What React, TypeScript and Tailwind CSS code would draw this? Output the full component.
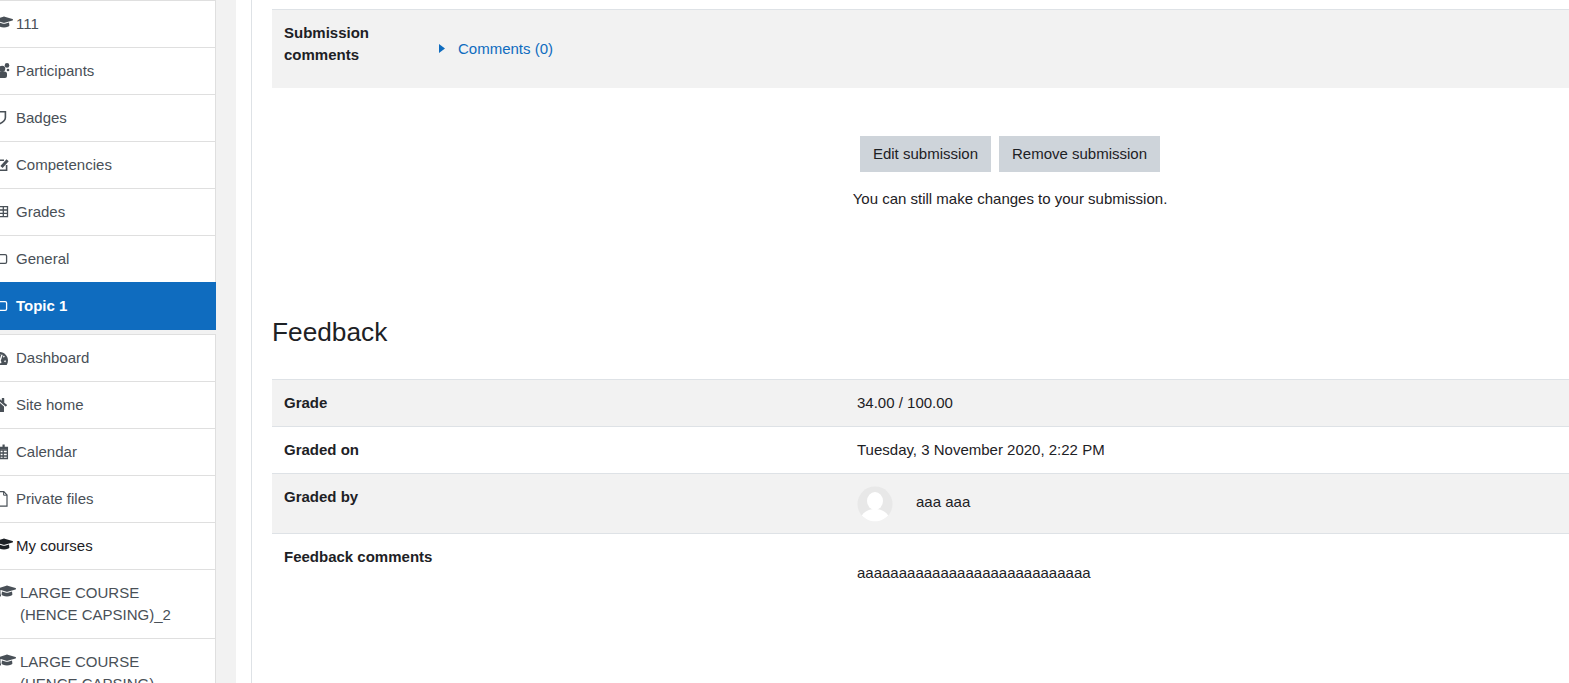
import React from "react";
import { FaGraduationCap, FaTachometerAlt, FaHome } from "react-icons/fa";

const Cap = ({ wide }: { wide?: boolean }) =>
  wide ? (
    <span className="flex w-[20px] shrink-0 overflow-hidden">
      <FaGraduationCap size={18} className="shrink-0 -ml-[2px]" />
    </span>
  ) : (
    <span className="mb-[4px] flex w-[16px] shrink-0 overflow-hidden">
      <FaGraduationCap size={18} className="shrink-0 -ml-[5px]" />
    </span>
  );

const Box = ({ children }: { children: React.ReactNode }) => (
  <svg width="16" height="16" viewBox="0 0 16 16" className="shrink-0" fill="none" stroke="currentColor">
    {children}
  </svg>
);

const Users = () => (
  <svg width="16" height="16" viewBox="0 0 16 16" className="shrink-0" fill="currentColor">
    <circle cx="7" cy="2.4" r="2.3" />
    <circle cx="2.2" cy="5.8" r="3.1" />
    <circle cx="8" cy="7" r="1.3" />
    <path d="M-3 15V11Q-3 8.5 -0.5 8.5H4.5Q7 8.5 7 11V13Q7 15 5 15Z" />
  </svg>
);
const Shield = () => (
  <Box>
    <path d="M-1 1.8H5.4V7.5C5.4 10.5 2.5 12.5 -1 14" strokeWidth="1.6" />
  </Box>
);
const Edit = () => (
  <Box>
    <path d="M-1 3.2H4M6.6 8V13.2H-1" strokeWidth="1.6" />
    <path d="M1.5 10L7.6 3.2" strokeWidth="3" />
  </Box>
);
const Table = () => (
  <Box>
    <path d="M-1 2.6H7.5V12.6H-1M-1 6H7.5M-1 9.3H7.5M3.3 2.6V12.6" strokeWidth="1.3" />
  </Box>
);
const Square = () => (
  <Box>
    <path d="M-1 3.7H5.2Q6.6 3.7 6.6 5.1V11Q6.6 12.4 5.2 12.4H-1" strokeWidth="1.3" />
  </Box>
);
const Gauge = () => (
  <span className="flex w-[16px] shrink-0 overflow-hidden">
    <FaTachometerAlt size={17} className="shrink-0 -ml-[9px]" />
  </span>
);
const Home = () => (
  <span className="flex w-[16px] shrink-0 overflow-hidden">
    <FaHome size={18} className="shrink-0 -ml-[11px]" />
  </span>
);
const Calendar = () => (
  <Box>
    <path d="M-1 6H7.4M-1 9H7.4M-1 12H7.4M3.2 6V14.5M0 5V14.5H7.4V3.4H-1" strokeWidth="1.3" />
    <path d="M3.6 0.5V3.6" strokeWidth="2.2" />
    <path d="M-1 4.4H7.4" strokeWidth="2" />
  </Box>
);
const File = () => (
  <Box>
    <path d="M-1 0.7H3.8L7 4V15.2H-1" strokeWidth="1.2" />
    <path d="M3.6 0.7V4.2H7" strokeWidth="1" />
  </Box>
);

const Row = ({
  icon,
  label,
  dark,
}: {
  icon: React.ReactNode;
  label: string;
  dark?: boolean;
}) => (
  <div
    className={
      dark
        ? "flex h-[47px] items-center border-t border-r border-[#dfdfdf] bg-white text-[#1d2125]"
        : "flex h-[47px] items-center border-t border-r border-[#dfdfdf] bg-white text-[#495057]"
    }
  >
    {icon}
    <span>{label}</span>
  </div>
);

const CourseRow = ({ clipped }: { clipped?: boolean }) => (
  <div className="flex items-start border-t border-r border-[#dfdfdf] bg-white py-[12px] leading-[22px] text-[#495057]">
    <Cap wide />
    <span>
      LARGE COURSE
      <br />
      {clipped ? "(HENCE CAPSING)" : "(HENCE CAPSING)_2"}
    </span>
  </div>
);

const Avatar = () => (
  <svg width="36" height="36" viewBox="0 0 36 36" className="shrink-0">
    <defs>
      <clipPath id="avatar-clip">
        <circle cx="18" cy="18" r="17.5" />
      </clipPath>
    </defs>
    <circle cx="18" cy="18" r="17.5" fill="#e8e8e8" />
    <g clipPath="url(#avatar-clip)" fill="#ffffff">
      <ellipse cx="18" cy="15" rx="8" ry="9" />
      <ellipse cx="18" cy="33" rx="14" ry="10" />
    </g>
  </svg>
);

export default function App() {
  return (
    <div className="flex h-[683px] w-full overflow-hidden bg-[#f2f2f2] font-['Liberation_Sans',Arial,sans-serif] text-[15px] leading-[22.5px] text-[#1d2125]">
      <aside className="flex w-[216px] shrink-0 flex-col">
        <div>
          <Row icon={<Cap />} label="111" />
          <Row icon={<Users />} label="Participants" />
          <Row icon={<Shield />} label="Badges" />
          <Row icon={<Edit />} label="Competencies" />
          <Row icon={<Table />} label="Grades" />
          <Row icon={<Square />} label="General" />
          <div className="flex h-[48px] items-center bg-[#0f6cbf] font-bold text-white">
            <Square />
            <span>Topic 1</span>
          </div>
        </div>
        <div className="mt-[4px]">
          <Row icon={<Gauge />} label="Dashboard" />
          <Row icon={<Home />} label="Site home" />
          <Row icon={<Calendar />} label="Calendar" />
          <Row icon={<File />} label="Private files" />
          <Row icon={<Cap />} label="My courses" dark />
          <CourseRow />
          <CourseRow clipped />
        </div>
      </aside>

      <main className="ml-[20px] min-w-0 flex-1 bg-white pl-[15px]">
        <div className="h-full border-l border-[#dee2e6] pl-[20px]">
          <div className="w-[1476px]">
            <div className="h-[9px]" />
            <div className="flex h-[79px] border-t border-[#dee2e6] bg-[#f2f2f2] p-[12px]">
              <div className="w-[154px] shrink-0 font-bold leading-[22px]">
                Submission
                <br />
                comments
              </div>
              <div className="flex items-center text-[#0f6cbf]">
                <svg width="20" height="12" viewBox="0 0 20 12" className="shrink-0" fill="currentColor">
                  <path d="M1 1L7 5.5L1 10Z" />
                </svg>
                <span>Comments (0)</span>
              </div>
            </div>

            <div className="mt-[48px] flex justify-center gap-[8px]">
              <button className="h-[36px] bg-[#ced4da] px-[13px] text-[#1d2125]">Edit submission</button>
              <button className="h-[36px] bg-[#ced4da] px-[13px] text-[#1d2125]">Remove submission</button>
            </div>
            <p className="mt-[16px] text-center">You can still make changes to your submission.</p>

            <h3 className="mt-[106px] text-[26.25px] leading-[31.5px]">Feedback</h3>

            <div className="mt-[31px]">
              <div className="grid h-[47px] grid-cols-[573px_1fr] border-t border-[#dee2e6] bg-[#f2f2f2] p-[12px]">
                <div className="font-bold">Grade</div>
                <div>34.00 / 100.00</div>
              </div>
              <div className="grid h-[47px] grid-cols-[573px_1fr] border-t border-[#dee2e6] p-[12px]">
                <div className="font-bold">Graded on</div>
                <div>Tuesday, 3 November 2020, 2:22 PM</div>
              </div>
              <div className="grid h-[60px] grid-cols-[573px_1fr] border-t border-[#dee2e6] bg-[#f2f2f2] p-[12px]">
                <div className="font-bold">Graded by</div>
                <div className="flex items-center gap-[23px]">
                  <Avatar />
                  <span className="pb-[4px]">aaa aaa</span>
                </div>
              </div>
              <div className="grid grid-cols-[573px_1fr] border-t border-[#dee2e6] px-[12px] pt-[12px]">
                <div className="font-bold">Feedback comments</div>
                <div className="pt-[16px]">aaaaaaaaaaaaaaaaaaaaaaaaaaaa</div>
              </div>
            </div>
          </div>
        </div>
      </main>
    </div>
  );
}
